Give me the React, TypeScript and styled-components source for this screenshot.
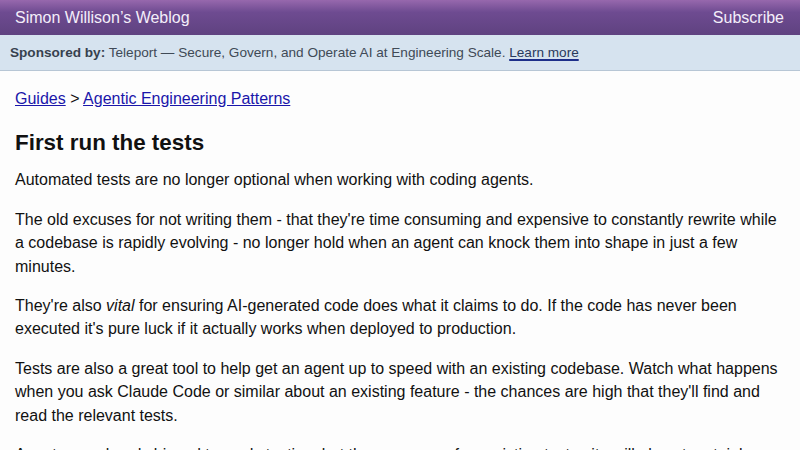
import styled, { createGlobalStyle } from "styled-components";

const GlobalStyle = createGlobalStyle`
  html, body {
    margin: 0;
    padding: 0;
    background: #fdfdfd;
    font-family: "Liberation Sans", Arial, Helvetica, sans-serif;
  }
`;

const Header = styled.header`
  display: flex;
  justify-content: space-between;
  align-items: center;
  height: 35px;
  padding: 0 16px 0 15px;
  background: linear-gradient(to bottom, #9768ad 0%, #6e4b91 35%, #5f4280 100%);
  color: #f4eefa;
  font-size: 16px;
`;

const HeaderLink = styled.a`
  color: inherit;
  text-decoration: none;
`;

const SponsorBar = styled.div`
  height: 35px;
  line-height: 35px;
  padding: 0 10px;
  background: #d6e3ef;
  border-bottom: 1px solid #b7c6d5;
  color: #404a56;
  font-size: 13.6px;
  white-space: nowrap;
`;

const SponsorLabel = styled.strong`
  font-weight: bold;
  color: #36414e;
`;

const LearnMore = styled.a`
  color: #2a3a5c;
  text-decoration: underline;
  text-decoration-color: #1d2f8a;
  text-decoration-thickness: 2px;
  text-underline-offset: 2px;
`;

const Main = styled.main`
  padding: 16px 15px 0;
  color: #111;
  font-size: 16px;
  line-height: 23.4px;
`;

const Crumbs = styled.div`
  margin: 0 0 18px;
`;

const Crumb = styled.a`
  color: #1a16aa;
  text-decoration: underline;
`;

const Title = styled.h1`
  font-size: 22.4px;
  font-weight: bold;
  line-height: 30px;
  margin: 0 0 10px;
  color: #111;
`;

const Para = styled.p`
  margin: 0 0 16px;
`;

export default function App() {
  return (
    <>
      <GlobalStyle />
      <Header>
        <HeaderLink href="#">Simon Willison’s Weblog</HeaderLink>
        <HeaderLink href="#">Subscribe</HeaderLink>
      </Header>
      <SponsorBar>
        <SponsorLabel>Sponsored by:</SponsorLabel>{" "}
        Teleport — Secure, Govern, and Operate AI at Engineering Scale.{" "}
        <LearnMore href="#">Learn more</LearnMore>
      </SponsorBar>
      <Main>
        <Crumbs>
          <Crumb href="#">Guides</Crumb> &gt;{" "}
          <Crumb href="#">Agentic Engineering Patterns</Crumb>
        </Crumbs>
        <Title>First run the tests</Title>
        <Para>Automated tests are no longer optional when working with coding agents.</Para>
        <Para>
          The old excuses for not writing them - that they're time consuming and expensive to
          constantly rewrite while a codebase is rapidly evolving - no longer hold when an agent
          can knock them into shape in just a few minutes.
        </Para>
        <Para>
          They're also <em>vital</em> for ensuring AI-generated code does what it claims to do. If
          the code has never been executed it's pure luck if it actually works when deployed to
          production.
        </Para>
        <Para>
          Tests are also a great tool to help get an agent up to speed with an existing codebase.
          Watch what happens when you ask Claude Code or similar about an existing feature - the
          chances are high that they'll find and read the relevant tests.
        </Para>
        <Para>
          Agents are already biased towards testing, but the presence of an existing test suite
          will almost certainly push the agent into testing new changes that it makes.
        </Para>
      </Main>
    </>
  );
}
